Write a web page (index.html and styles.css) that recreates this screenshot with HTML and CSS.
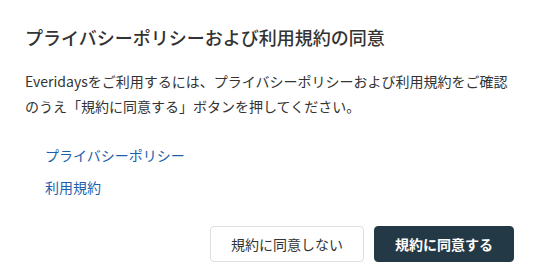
FILE: index.html
```html
<!DOCTYPE html>
<html lang="ja">
<head>
<meta charset="utf-8">
<link rel="stylesheet" href="styles.css">
</head>
<body>
<div class="dialog">
  <h2 class="title">プライバシーポリシーおよび利用規約の同意</h2>
  <p class="desc">Everidaysをご利用するには、プライバシーポリシーおよび利用規約をご確認のうえ「規約に同意する」ボタンを押してください。</p>
  <ul class="links">
    <li><a class="link" href="#">プライバシーポリシー</a></li>
    <li><a class="link" href="#">利用規約</a></li>
  </ul>
  <div class="actions">
    <button class="btn btn-secondary">規約に同意しない</button>
    <button class="btn btn-primary">規約に同意する</button>
  </div>
</div>
</body>
</html>
```
FILE: styles.css
```css
* { box-sizing: border-box; }
html, body { margin: 0; padding: 0; background: #fff; }
body {
  font-family: "Noto Sans CJK JP", "Noto Sans", sans-serif;
  color: #333;
  width: 550px;
  height: 276px;
  overflow: hidden;
}
.dialog {
  padding: 24px 36px 0 25px;
}
.title {
  margin: 0;
  font-size: 18px;
  font-weight: 500;
  line-height: 27px;
  color: #333;
}
.desc {
  margin: 18px 0 0;
  font-size: 14px;
  line-height: 24.5px;
  color: #333;
}
.links {
  list-style: none;
  margin: 26px 0 0;
  padding: 0 0 0 20px;
  display: flex;
  flex-direction: column;
  gap: 10px;
}
.link {
  font-size: 14px;
  line-height: 21px;
  color: #1b5fad;
  text-decoration: none;
}
.links li { line-height: 21px; }
.actions {
  display: flex;
  justify-content: flex-end;
  gap: 10px;
  margin-top: 28px;
}
.btn {
  font-family: inherit;
  font-size: 14px;
  height: 36px;
  padding: 0 20px;
  border-radius: 4px;
  cursor: pointer;
}
.btn-secondary {
  background: #fff;
  border: 1px solid #dcdfe3;
  color: #333;
}
.btn-primary {
  background: #243946;
  border: 1px solid #243946;
  color: #fff;
  font-weight: 700;
}
```
